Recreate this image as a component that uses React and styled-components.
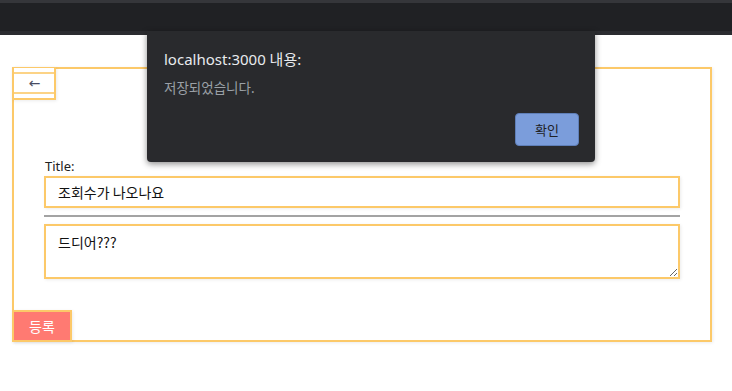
import React from 'react'
import styled, { createGlobalStyle } from 'styled-components'

const GlobalStyle = createGlobalStyle`
  html, body {
    margin: 0;
    padding: 0;
    background: #fff;
    font-family: "Noto Sans", "Noto Sans CJK KR", sans-serif;
  }
`

const orange = '#fcc969'

const Page = styled.div`
  position: relative;
  width: 732px;
  height: 391px;
  overflow: hidden;
`

const BrowserBar = styled.div`
  height: 28px;
  background: #202124;
  border-top: 3px solid #35363a;
  border-bottom: 4px solid #2b2c30;
`

const Content = styled.div`
  padding: 32px 20px 0 12px;
`

const Board = styled.div`
  border: 2px solid ${orange};
  box-shadow: 1px 1px 3px rgba(0, 0, 0, 0.08);
  height: 271px;
  display: flex;
  flex-direction: column;
`

const BackButton = styled.button`
  margin: -2px 0 0 -2px;
  width: 44px;
  height: 33px;
  padding: 4px 0;
  border: 2px solid ${orange};
  border-top-width: 1px;
  background: #fff;
  box-shadow: 1px 1px 3px rgba(0, 0, 0, 0.08);
  display: flex;
  cursor: pointer;
`

const BackInner = styled.span`
  flex: 1;
  border-top: 2px solid ${orange};
  border-bottom: 2px solid ${orange};
  opacity: 0.8;
  display: flex;
  align-items: center;
  justify-content: center;
  font-size: 14px;
  color: #1b1f3b;
  font-family: "DejaVu Sans", sans-serif;
  line-height: 1;
  padding-left: 1px;
`

const Form = styled.form`
  padding: 58px 30px 0 30px;
  display: flex;
  flex-direction: column;
  flex: 1;
`

const Label = styled.label`
  font-size: 13px;
  color: #222;
  line-height: 17px;
  padding-left: 1px;
`

const TitleInput = styled.input`
  box-sizing: border-box;
  width: 100%;
  height: 32px;
  margin: 1px 0 0;
  padding: 0 12px;
  border: 2px solid ${orange};
  box-shadow: 1px 1px 3px rgba(0, 0, 0, 0.08);
  font-family: "Noto Sans CJK KR", sans-serif;
  font-size: 14px;
  color: #111;
  outline: none;
`

const Rule = styled.hr`
  margin: 7px 0 7px;
  border: none;
  border-top: 2px solid #a3a3a3;
`

const BodyInput = styled.textarea`
  box-sizing: border-box;
  width: 100%;
  height: 55px;
  padding: 6px 12px;
  border: 2px solid ${orange};
  box-shadow: 1px 1px 3px rgba(0, 0, 0, 0.08);
  font-family: "Noto Sans CJK KR", sans-serif;
  font-size: 14px;
  line-height: 20px;
  color: #111;
  outline: none;
  resize: vertical;
`

const Footer = styled.div`
  margin-top: auto;
  display: flex;
`

const SubmitButton = styled.button`
  margin: 0 0 -2px -2px;
  width: 60px;
  height: 32px;
  border: 2px solid ${orange};
  background: #ff7a72;
  color: #fff;
  font-family: "Noto Sans CJK KR", sans-serif;
  font-size: 14px;
  box-shadow: 1px 1px 3px rgba(0, 0, 0, 0.08);
  cursor: pointer;
`

const Dialog = styled.div`
  position: absolute;
  left: 147px;
  top: 31px;
  width: 448px;
  height: 131px;
  box-sizing: border-box;
  padding: 17px 16px 16px 17px;
  background: #292a2d;
  border-radius: 0 0 4px 4px;
  box-shadow: 0 2px 6px rgba(0, 0, 0, 0.45);
  display: flex;
  flex-direction: column;
  font-family: "Noto Sans", "Noto Sans CJK KR", sans-serif;
`

const DialogTitle = styled.div`
  font-size: 15px;
  line-height: 22px;
  color: #e8eaed;
`

const DialogMessage = styled.div`
  margin-top: 8px;
  font-size: 13.5px;
  line-height: 20px;
  color: #9aa0a6;
`

const DialogActions = styled.div`
  margin-top: auto;
  display: flex;
  justify-content: flex-end;
`

const OkButton = styled.button`
  width: 64px;
  height: 33px;
  border: 1px solid #5f7fb8;
  border-radius: 4px;
  background: #7b9ddb;
  color: #202124;
  font-family: "Noto Sans CJK KR", sans-serif;
  font-size: 13px;
  cursor: pointer;
`

export default function App() {
  return (
    <Page>
      <GlobalStyle />
      <BrowserBar />
      <Content>
        <Board>
          <BackButton type="button">
            <BackInner>←</BackInner>
          </BackButton>
          <Form onSubmit={e => e.preventDefault()}>
            <Label>Title:</Label>
            <TitleInput defaultValue="조회수가 나오나요" />
            <Rule />
            <BodyInput defaultValue="드디어???" />
          </Form>
          <Footer>
            <SubmitButton type="submit">등록</SubmitButton>
          </Footer>
        </Board>
      </Content>
      <Dialog>
        <DialogTitle>localhost:3000 내용:</DialogTitle>
        <DialogMessage>저장되었습니다.</DialogMessage>
        <DialogActions>
          <OkButton type="button">확인</OkButton>
        </DialogActions>
      </Dialog>
    </Page>
  )
}
